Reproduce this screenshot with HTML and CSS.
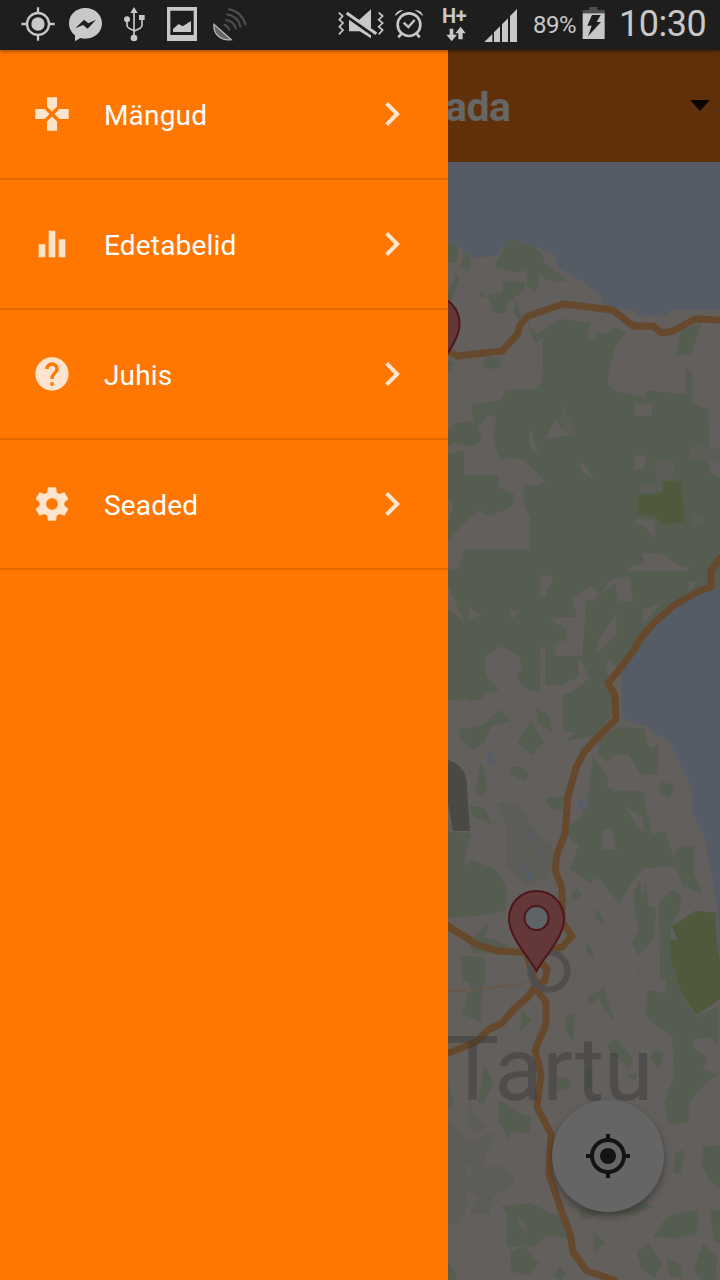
FILE: index.html
```html
<!DOCTYPE html>
<html lang="et">
<head>
<meta charset="utf-8">
<meta name="viewport" content="width=device-width">
<title>Rada</title>
<link rel="stylesheet" href="styles.css">
</head>
<body>
<div class="statusbar">
  <div class="status-group">
    <svg width="42" height="50" viewBox="60 0 126 150"><circle cx="114" cy="72" r="33" fill="none" stroke="#c8c8c8" stroke-width="7"/><circle cx="114" cy="72" r="20" fill="#c8c8c8"/><path d="M114 22v20M114 102v20M64 72h20M144 72h20" stroke="#c8c8c8" stroke-width="7"/></svg>
    <svg width="51" height="50" viewBox="186 0 153 150"><path d="M256 24c29 0 50 20 50 46s-21 46-50 46c-5 0-10-1-15-2l-16 10v-18c-11-8-18-21-18-36 0-26 21-46 49-46z" fill="#c8c8c8"/><path d="M226 85l26-26 13 11 23-11-25 27-14-11z" fill="#1e1e1e"/></svg>
    <svg width="43" height="50" viewBox="339 0 129 150"><g fill="#c8c8c8"><path d="M402 21l11 18h-22zM417 45h17v15h-17z"/><circle cx="381" cy="58" r="9"/><circle cx="402" cy="114" r="10"/></g><path d="M402 35v75M381 62v13q0 7 6 10l15 7M426 55v20q0 7-6 10l-18 9" fill="none" stroke="#c8c8c8" stroke-width="5"/></svg>
    <svg width="48" height="50" viewBox="468 0 144 150"><path fill="#c8c8c8" fill-rule="evenodd" d="M501 21h90v102h-90zM511 32v73h70V32z"/><path fill="#c8c8c8" d="M519 96v-9l17-15 12 7 25-16v33z"/></svg>
    <svg width="50" height="50" viewBox="612 0 150 150"><path d="M642 73c-3 28 19 50 52 46z" fill="#666" stroke="#b8b8b8" stroke-width="4"/><g fill="none" stroke="#505050" stroke-width="6"><path d="M671 74q15 3 17 18M676 59q27 4 32 29M679 43q36 5 43 39M685 27q42 9 52 49"/></g></svg>
  </div>
  <div class="status-group">
    <svg width="52" height="50" viewBox="48 0 156 150"><g fill="none" stroke="#c8c8c8" stroke-width="5"><path d="M56 38l12 10-10 11 11 10-11 11 11 10-12 13M176 38l12 10-12 11 12 10-12 11 12 10-12 13"/></g><path d="M87 60h30l36-32v87l-34-21H87z" fill="#c8c8c8"/><path d="M78 43l89 63" stroke="#1e1e1e" stroke-width="16"/><path d="M80 39l89 62" stroke="#c8c8c8" stroke-width="9"/></svg>
    <svg width="40" height="50" viewBox="204 0 120 150"><g fill="none" stroke="#c8c8c8"><circle cx="267" cy="74" r="34" stroke-width="8"/><path d="M251 68l14 13 19-21" stroke-width="7"/><path d="M244 101l-9 11M290 101l9 11" stroke-width="8"/></g><path d="M225 48c1-10 12-19 25-18zM309 48c-1-10-12-19-25-18z" fill="#c8c8c8"/></svg>
    <svg width="48" height="50" viewBox="324 0 144 150"><text x="366" y="69" class="net">H+</text><path d="M389 86h11v18h11l-16 20-16-20h10zM415 118h13v-18h9l-15-20-16 20h9z" fill="#c8c8c8"/></svg>
    <svg width="50" height="50" viewBox="468 0 150 150"><path d="M493 126l24-24v24zM522 97l18-18v47h-18zM546 73l18-18v71h-18zM570 48l21-21v99h-21z" fill="#c8c8c8"/></svg>
    <span class="battery-level">89%</span>
    <svg width="39" height="50" viewBox="781 0 117 150"><path fill="#4e4e4e" d="M809 21h24v9h22v11h-66V30h20z"/><path fill="#c8c8c8" d="M789 40h66v77h-66z"/><path fill="#1e1e1e" d="M817 45h26l-12 21h13l-39 43 11-32h-13z"/></svg>
    <time class="clock">10:30</time>
  </div>
</div>
<div class="screen">
  <nav class="drawer">
    <a class="item">
      <svg class="icon" viewBox="0 0 24 24"><path d="M15 7.500V2H9v5.500l3 3 3-3zM7.500 9H2v6h5.500l3-3-3-3zM9 16.500V22h6v-5.500l-3-3-3 3zM16.500 9l-3 3 3 3H22V9h-5.500z"/></svg>
      <span class="label">Mängud</span>
      <svg class="chevron" viewBox="0 0 24 24"><path d="M10 6L8.590 7.410 13.170 12l-4.580 4.590L10 18l6-6z"/></svg>
    </a>
    <a class="item">
      <svg class="icon" viewBox="0 0 24 24"><path d="M4 12.200h4V20H4zM10 4h4v16h-4zM16 9.200h4V20h-4z"/></svg>
      <span class="label">Edetabelid</span>
      <svg class="chevron" viewBox="0 0 24 24"><path d="M10 6L8.590 7.410 13.170 12l-4.580 4.590L10 18l6-6z"/></svg>
    </a>
    <a class="item">
      <svg class="icon" viewBox="0 0 24 24"><path d="M12 2C6.480 2 2 6.480 2 12s4.480 10 10 10 10-4.480 10-10S17.520 2 12 2zm1 17h-2v-2h2v2zm2.070-7.750l-.9.920C13.450 12.900 13 13.500 13 15h-2v-.5c0-1.100.45-2.100 1.170-2.830l1.240-1.260c.37-.36.59-.86.59-1.410 0-1.100-.9-2-2-2s-2 .9-2 2H8c0-2.210 1.790-4 4-4s4 1.790 4 4c0 .88-.36 1.680-.93 2.250z"/></svg>
      <span class="label">Juhis</span>
      <svg class="chevron" viewBox="0 0 24 24"><path d="M10 6L8.590 7.410 13.170 12l-4.580 4.590L10 18l6-6z"/></svg>
    </a>
    <a class="item">
      <svg class="icon" viewBox="0 0 24 24"><path d="M19.430 12.980c.04-.32.07-.64.07-.98s-.03-.66-.07-.98l2.110-1.650c.19-.15.24-.42.12-.64l-2-3.460c-.12-.22-.39-.3-.61-.22l-2.490 1c-.52-.4-1.080-.73-1.690-.98l-.38-2.650C14.460 2.180 14.250 2 14 2h-4c-.25 0-.46.18-.49.420l-.38 2.650c-.61.25-1.170.59-1.690.98l-2.490-1c-.23-.09-.49 0-.61.22l-2 3.460c-.13.22-.07.49.12.64l2.110 1.650c-.04.32-.07.65-.07.98s.03.66.07.98l-2.110 1.650c-.19.15-.24.42-.12.64l2 3.460c.12.22.39.3.61.22l2.490-1c.52.4 1.080.73 1.690.98l.38 2.650c.03.24.24.42.49.42h4c.25 0 .46-.18.49-.42l.38-2.650c.61-.25 1.170-.59 1.690-.98l2.490 1c.23.09.49 0 .61-.22l2-3.460c.12-.22.07-.49-.12-.64l-2.110-1.650zM12 15.500c-1.930 0-3.500-1.570-3.500-3.500s1.570-3.500 3.500-3.500 3.500 1.570 3.500 3.500-1.570 3.500-3.500 3.500z"/></svg>
      <span class="label">Seaded</span>
      <svg class="chevron" viewBox="0 0 24 24"><path d="M10 6L8.590 7.410 13.170 12l-4.580 4.590L10 18l6-6z"/></svg>
    </a>
  </nav>
  <main class="content">
    <header class="toolbar">
      <h1 class="title">ada</h1>
      <svg class="caret" viewBox="0 0 20 11"><path d="M0 0h20L10 11z"/></svg>
    </header>
    <div class="map">
      <svg class="map-art" viewBox="448 162 272 1118">
        <path class="land" d="M448 244l13 3 11 11 25-2 12-18 20 6 26 11 2 12 26 14 17 15 5 11 30 3 2 5 17 1 13-1 3-5 50 0V1280H448z"/>
        <!-- north coast -->
        <g class="forest" transform="translate(440 40) scale(.33333)">
          <path d="M24 612l30 8-5 45-25 4zM72 637l23 22-8 35-27-11zM48 700l8 20-22 60-10 10v-40l16-18zM205 594l60 18 37 22 12 37 38 26 28 26-44 2-40-20-3 44-10 6-22-18v-48l-28 10-70-18zM190 726l62-1 4 19-54 50-6 28-33-4-18-50 43-12zM125 748l15 22-26 3zM226 779l20 50-8 8-18-20zM262 850l27 33 76-46 83 12-15 116-47-3-16-6 4 40 22-30 44 15 14-53 15-20v-30l40 2 14-20 34 14-33 54-18 60-4 90H308V895l-22 15zM725 870l60-20-32 92-46 1zM140 950l40 4 2 31-54 1zM24 960l18 10-8 20-10 6zM738 985l16 10v40h-20z"/>
        </g>
        <!-- central woodland -->
        <g transform="translate(440 340) scale(.33333)">
          <path class="forest" d="M312 0h210l-35 114 35 38 92 22 5-23 120 12V112l15 12v66l50 20 6 190 30 12v610H24V345l48-15v75h105v40l44 15-4 40-65 28-36-17-46 40-46 50v90l35-4 12-58h198V530l-18-35V430l37 10 28-15-65-66-45-8-24 12-15-35-6-50 8-42-26-15-28 40 10 40-25 20-58-14-18 10V270l24-20 54-6-8-50 12 0 78-14 16-30 82-2 26-24z"/>
          <path class="forest-light" d="M365 185l37 75v24l-40-10z"/>
          <path class="land" d="M345 235l25 38 28 10-82 16zM268 260l28 80-24-15zM415 365l20 9 26 42-30-18zM584 190h53v38h-53zM584 345l36 3-10 42h-26zM588 536l54 5 6 56-22-20-12-20-26-2zM605 638l65 4 50 36 24 5 10-43-14 53H562l20-18 34-2zM298 705l44 5-28 60h-16zM395 780l60-46 25 30 30-44 30-8 28 0 12 70-45 2-10-52-35 24-32 26-20-4-10 168-60-2-16-40 32-4-8-36-42-20v-10l78-4zM530 815v68l-60 60 4-42zM24 735l50 112-50-42zM85 800l40 26-38 12zM212 812l30-4-27 32zM608 810l55-20-52 60zM745 722l25 5-25 30zM298 945l20 50-2 25h-20zM415 950l30 70h-30zM24 480l18 5-16 60z"/>
          <path class="forest-light" d="M640 365l62-6v50l-38 20 6 30-70-4 2-26 50-1zM750 325l50-14 10 24 30-14v48l-90-10zM760 520l28 5v30l-28 4z"/>
          <path class="park" d="M668 424h55l2 36 10 84-68 10-28-28-45-4v-58h58l18-12z"/>
        </g>
        <!-- Tartu county -->
        <g transform="translate(440 640) scale(.33333)">
          <path class="forest" d="M24 100H560V180H24z"/>
          <path class="land" d="M24 235h35l10-68 34 32 30-35 44-14-40-40-5-50 20-25 31-17 56 30 10 45-14 30 36 30 28 1V20h16v115l60-8 40-17V50l35 65-70 50V270l230-120 90 280v465H24z"/>
          <path class="land" d="M340 20l75-20v48h-65zM500 60l60 40-20 160-60 40 10-60 30-50-15-50z"/>
          <path class="forest" d="M205 0H298v140q-52 0-68-42l20-12-10-36-34-32zM320 52l93-4-2 62-44 26-50 0z"/>
          <path class="forest" d="M177 210l35 32-60 17-20 52-36 18-38-32 4-30 70-13zM285 198l42 30 12 55-45-35zM272 240l22 40 20 26-40 38-40-34zM212 380l34 0 20 24-14 16-40-18zM122 370l22 72-16 28-20-14zM320 475l60-8v38l-30 8-30-20zM370 165l70-20 60-25 18 40v60l-48 64-92 20 30-28-38-4zM480 300l50-40 80 5 20 60 26-10-4 90-50-4-35-58-42 2-28 20-24-22zM460 350l42 60 0 30 20 13h85l30 130 40-10 26 90 6-30 15-14h38v80l25 60-58-20-22-60-40 0-58 7-40 50-30 55-66-80-24 18-60-44 28-68-32-26V560l54-50zM90 498l40 5 28 50-60-24zM24 575l70 5-18 60-5 45-47 30zM100 660l70 30 32 60-8 64-50 10-120 10V710zM410 745l14 20-24 20-8-20zM470 805l26 50-30-20zM575 910l20-40-15-110 18-40 10 55 8-55 8 75 24 10-6 90-45 50zM658 785l35-35 28 15v40l-28 50v60l35 70-2 35h-65zM665 425l38 10-12 40-32-20zM140 855l10 4-30 45-20-14zM440 900l24 55-24-15zM60 945l70 10 8 70H70zM80 890l80 6 50 24v20H100z"/>
          <path class="forest-light" d="M170 485l62 6 40 60 34 45 30 15 4 40-22 60-60 20-56-50-2-118z"/>
          <path class="land" d="M555 495l55 40v42l-20-20zM488 568h28l14 62-44-2z"/>
          <path class="park" d="M696 860l70-48 60 6 6 112 20 80v60l-60 40-60-50V940z"/>
        </g>
        <!-- south -->
        <g class="forest" transform="translate(440 940) scale(.33333)">
          <path class="park" d="M690 0h140v180l-60 45-45-60-30-90z"/>
          <path d="M90 45l48 30-12 90-4 78-58-20 25-75zM445 165l50-20 25 95-30-35-12-30-32 20zM245 210l30 30-36 35zM378 230l26-10-4 90-26-45zM625 150l50 10 4-50 24-25 24 90 43 55 66-30v120l-28-30-54 10 10 30 36 20-10 40 45 12-45 36-45 50 2 60-60 3-14-60 28-80-4-120-82-65zM500 310l30-14 48 62-8 25-60-50zM640 330l32 10-16 50-26-40zM24 420l18 80H24zM132 375l28 50-32 70-14-10zM178 480l60 38 34 14-2 50-56-10-12 26-26-60zM182 800l90-10 60 30 60 15-8 60-65-10-40 35 -78 0v-100zM212 935l40-15 44 50-30 35-52-10zM360 975l20 30-18 15-20-10zM460 875l34 35-34 26zM705 635l28-4-12 70-20-4zM790 620l50-5v130l-30-20-25-50zM640 890l40-60 95-22-4 75-70 12zM590 935l35-25 40 60-20 45-40-30zM790 910l40 40-4 70h-40l-25-30zM680 955l40 20 10 40-40-6zM810 810h30v100l-20-10zM24 960l30 60H24zM350 410l40 8 0 28-38 6zM440 375l18 10v60l-22-5zM560 408l30-8-5 22zM540 760l100 40-60 25-60-10zM415 800l80 15-70 25z"/>
          <path class="forest-light" d="M85 490l50 75-30 20-24-30zM24 530l55 80 85-30-40 100 60 0 38 30-4 22-60 40-10 50-60 0 25-50-30-20-43 110-16-15zM60 790l23-10-28 80-31-35z"/>
          <path class="land" d="M150 840l16 56-20-20zM235 835l25 20 0 25-25-25zM80 680l25-10-10 35-20 10z"/>
        </g>
        <!-- lake Peipus and ponds -->
        <path class="water" d="M720 587l-14 5-19 8-20 14-21 20-13 22-12 16 1 46 25 9 23 15 22 47v22l13 28 12 67 1 43 2 8z"/>
        <path class="pond" d="M486 751l6 4 4 12-7-5zM577 800l8 2v9l-7-5zM528 826l9 14-4 1zM538 850l8 6-2 3zM521 865l8 4 6 12-5 1zM639 968l4 5-6 1z"/>
        <!-- highways -->
        <g class="road">
          <path d="M446 350l11 6 45-5 15-16 3-10 8-9 35-12 50 6 20 16h20l9 7 11-2 22-12 27 1"/>
          <path d="M722 556l-11 14v17l-12 4-26 15-20 18-13 15-6 11-12 16-14 17 7 12 1 24-18 18-14 15-8 16-8 28-3 38-8 20-2 16 7 18 0 34 10 14-10 11-24 6-40-2-20-6-32-20"/>
          <path d="M526 952l6 20 5 18 9 12v22l-11 26 6 24-4 33 14 27-2 40 11 33 10 27 3 18 14 19 30 10"/>
          <path d="M446 1054l30-12 12-12 14-7 12-14 14-12 8-12 9-4 2-12-8-8"/>
        </g>
        <path class="minor-road" d="M448 991h22l25-4 25-2 14-6"/>
        <circle class="city-ring" cx="549" cy="971" r="18.500"/>
        <path class="label-piece" d="M448 760q20 6 19 29l3 42h-17l-5-28z"/>
        <text class="city" x="446" y="1100">Tartu</text>
        <!-- markers -->
        <path class="pin" d="M536.500 971c-5-11-27.500-33-27.500-52 0-16 12-28 27.500-28s27.500 12 27.500 28c0 19-22.500 41-27.500 52z" transform="translate(-104.500 -595)"/>
        <path class="pin" d="M536.500 971c-5-11-27.500-33-27.500-52 0-16 12-28 27.500-28s27.500 12 27.500 28c0 19-22.500 41-27.500 52z"/>
        <circle class="pin-hole" cx="536.500" cy="918" r="12"/>
      </svg>
      <button class="locate" aria-label="Asukoht">
        <svg width="48" height="48" viewBox="0 0 24 24"><circle cx="12" cy="12" r="4"/><path d="M20.940 11c-.46-4.170-3.770-7.480-7.940-7.940V1h-2v2.060C6.830 3.520 3.520 6.830 3.060 11H1v2h2.060c.46 4.170 3.770 7.480 7.940 7.940V23h2v-2.060c4.170-.46 7.480-3.770 7.940-7.940H23v-2h-2.060zM12 19c-3.870 0-7-3.130-7-7s3.130-7 7-7 7 3.130 7 7-3.130 7-7 7z"/></svg>
      </button>
    </div>
  </main>
</div>
</body>
</html>
```
FILE: styles.css
```css
* { box-sizing: border-box; }
body {
  margin: 0;
  width: 720px;
  height: 1280px;
  overflow: hidden;
  display: flex;
  flex-direction: column;
  font-family: Roboto, "Noto Sans", sans-serif;
}
svg { display: block; flex: none; }
.statusbar {
  height: 50px;
  flex: none;
  display: flex;
  justify-content: space-between;
  padding: 0 14px 0 20px;
  background: #1e1e1e;
  color: #c8c8c8;
  box-shadow: 0 1px 4px rgba(0, 0, 0, .45);
  z-index: 2;
}
.status-group { display: flex; align-items: center; }
.net { font-size: 60px; font-weight: 700; fill: #c8c8c8; letter-spacing: -1px; }
.battery-level { width: 54px; padding-left: 7px; font-size: 24px; line-height: 48px; letter-spacing: -.5px; white-space: nowrap; }
.clock { width: 87px; font-size: 36px; line-height: 46px; padding-bottom: 2px; letter-spacing: -.5px; white-space: nowrap; }
.screen { flex: 1; display: flex; min-height: 0; }
.drawer { width: 448px; flex: none; background: #ff7700; }
.item {
  display: flex;
  align-items: center;
  height: 130px;
  padding: 0 32px;
  border-bottom: 2px solid #e06900;
}
.icon { width: 40px; height: 40px; fill: #ffe4cd; }
.chevron { width: 48px; height: 48px; fill: #ffe4cd; }
.label { flex: 1; margin-left: 32px; padding-top: 3px; font-size: 28px; color: #fff; letter-spacing: .17px; }
.content { flex: 1; min-width: 0; display: flex; flex-direction: column; overflow: hidden; }
.toolbar {
  height: 112px;
  flex: none;
  display: flex;
  align-items: center;
  justify-content: space-between;
  padding-right: 10px;
  background: #60300a;
}
.title { margin: 2px 0 0 -3px; font-size: 41px; font-weight: 700; letter-spacing: -.5px; color: #666; }
.caret { width: 20px; height: 11px; margin-bottom: 2px; fill: #0c0600; }
.map { flex: 1; position: relative; background: #555c66; }
.map-art { width: 272px; height: 1118px; }
.land { fill: #625f5c; }
.forest { fill: #555c50; }
.forest-light { fill: #5b5d56; }
.park { fill: #50593c; }
.water { fill: #555c66; }
.pond { fill: #555d6c; }
.road { fill: none; stroke: #66492d; stroke-width: 7; stroke-linejoin: round; }
.minor-road { fill: none; stroke: #68594e; stroke-width: 2; }
.city-ring { fill: none; stroke: #504f4d; stroke-width: 6; }
.label-piece { fill: #30332f; opacity: .5; }
.city { font-size: 89px; fill: #333; opacity: .4; }
.pin { fill: #643838; stroke: #4e171b; stroke-width: 2; }
.pin-hole { fill: #5e6467; stroke: #4e171b; stroke-width: 2; }
.locate {
  position: absolute;
  right: 56px;
  bottom: 68px;
  width: 112px;
  height: 112px;
  padding: 0;
  border: 0;
  border-radius: 50%;
  background: #656565;
  box-shadow: 0 4px 9px rgba(0, 0, 0, .35);
  display: grid;
  place-items: center;
  fill: #141414;
}
```
